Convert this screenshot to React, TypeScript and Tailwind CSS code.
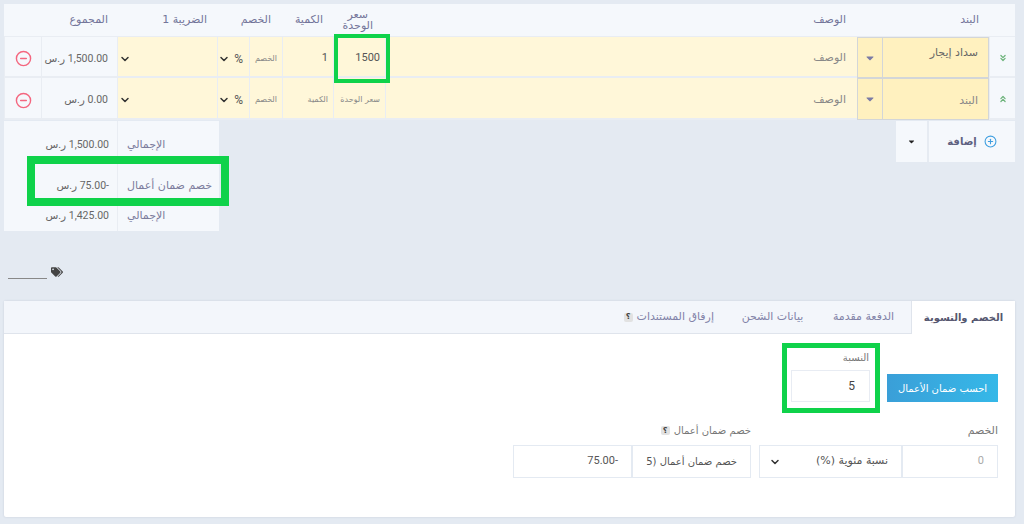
import React from 'react';
import { ChevronDown, ChevronsDown, ChevronsUp, CircleMinus, CirclePlus } from 'lucide-react';
import { FaCaretDown, FaTags } from 'react-icons/fa';

const headers = [
  { label: '', cls: '' },
  { label: 'البند', cls: 'pr-[10px]' },
  { label: '', cls: '' },
  { label: 'الوصف', cls: 'pr-[11px]' },
  { label: 'سعر الوحدة', cls: 'leading-[11px] text-center px-3' },
  { label: 'الكمية', cls: 'pr-[10px]' },
  { label: 'الخصم', cls: 'pr-[11px] whitespace-nowrap' },
  { label: '', cls: '' },
  { label: 'الضريبة 1', cls: 'pr-[10px]' },
  { label: 'المجموع', cls: 'pr-[9px]' },
  { label: '', cls: '' },
];

const cols = 'grid grid-cols-[26px_107px_25px_472px_52px_51px_33px_32px_100px_76px_37px]';

function Chevron({ className = '' }: { className?: string }) {
  return <ChevronDown className={`w-[12px] h-[12px] text-[#333] ${className}`} strokeWidth={3} />;
}

function Row({
  top,
  itemName,
  price,
  qty,
  total,
}: {
  top: boolean;
  itemName: string;
  price: string;
  qty: string;
  total: string;
}) {
  const cell = 'border-b-2 border-l border-[#e9edf3] flex items-center pt-[4px]';
  return (
    <div className={`${cols} ${top ? 'h-[41px]' : 'h-[42px]'} text-[#888]`}>
      <div className="border-b-2 border-l border-[#e9edf3] flex items-center pt-[2px] bg-[#f5f8fc] justify-center">
        {top ? (
          <ChevronsDown className="w-[10px] h-[10px] text-[#6cb37a]" strokeWidth={3} />
        ) : (
          <ChevronsUp className="w-[10px] h-[10px] text-[#6cb37a]" strokeWidth={3} />
        )}
      </div>
      <div
        className={`border border-[#d3d6d8] bg-[#fff1bf] flex pr-[10px] text-[11px] ${
          top ? 'pt-[7px] items-start text-[#666]' : 'pt-[5px] items-center text-[#888]'
        }`}
      >
        {itemName}
      </div>
      <div className="border border-r-0 border-[#d3d6d8] bg-[#fff1bf] flex items-center justify-center">
        <FaCaretDown className="w-[12px] h-[12px] text-[#7b7ba5]" />
      </div>
      <div className={`${cell} bg-[#fff7d9] pr-[11px] text-[11px]`}>الوصف</div>
      <div className={`${cell} bg-[#fff7d9] pr-[5px] ${price === '' ? 'text-[8px]' : ''}`}>
        {price === '' ? (
          'سعر الوحدة'
        ) : (
          <span className="text-[11px] text-[#555] font-['Roboto',sans-serif]">{price}</span>
        )}
      </div>
      <div className={`${cell} bg-[#fff7d9] pr-[5px]`}>
        {qty === '' ? (
          <span className="text-[8px]">الكمية</span>
        ) : (
          <span className="text-[11px] text-[#555] font-['Roboto',sans-serif]">{qty}</span>
        )}
      </div>
      <div className={`${cell} bg-[#fff7d9] pr-[5px] text-[8px]`}>الخصم</div>
      <div className={`${cell} bg-[#fff7d9] justify-between pr-[6px] text-[11px] text-[#555]`}>
        <span className="font-['Roboto',sans-serif] text-[12px]">%</span>
        <Chevron />
      </div>
      <div className={`${cell} bg-[#fff7d9] justify-end pl-[1px]`}>
        <Chevron />
      </div>
      <div className={`${cell} bg-[#f5f8fc] pr-[9px] whitespace-nowrap text-[10.5px] text-[#666] font-['Roboto','DejaVu_Sans',sans-serif]`}>
        {total}
      </div>
      <div className={`${cell} bg-[#f5f8fc] justify-center`}>
        <CircleMinus className="w-[17px] h-[17px] text-[#f4667f]" strokeWidth={2} />
      </div>
    </div>
  );
}

function SumRow({ label, value, cls }: { label: string; value: string; cls: string }) {
  return (
    <div className={`grid grid-cols-[102px_113px] ${cls}`}>
      <div className="border-l border-[#e9edf3] pl-[9px] text-left whitespace-nowrap text-[11px] text-[#7c7c9c]">{label}</div>
      <div className="pr-[8px] text-[10.5px] text-[#666] font-['Roboto','DejaVu_Sans',sans-serif]">{value}</div>
    </div>
  );
}

function Help() {
  return (
    <span className="inline-flex w-[9px] h-[9px] rounded-[2px] bg-[#e2e2e2] text-[#444] text-[8px] font-bold items-center justify-center leading-none">
      ؟
    </span>
  );
}

export default function App() {
  return (
    <div
      dir="rtl"
      className="relative w-[1024px] h-[524px] overflow-hidden bg-[#e4eaf2] pt-[4px] pr-[9px] pl-[4px] font-['DejaVu_Sans','Noto_Sans',sans-serif]"
    >
      {/* table */}
      <div className={`${cols} h-[33px] bg-[#f5f8fc] border-b border-[#e9edf3] text-[11px] text-[#73759a]`}>
        {headers.map((h, i) => (
          <div key={i} className={`flex items-center ${h.cls}`}>
            {h.label}
          </div>
        ))}
      </div>
      <Row top itemName="سداد إيجار" price="1500" qty="1" total="1,500.00 ر.س" />
      <Row top={false} itemName="البند" price="" qty="" total="0.00 ر.س" />

      {/* add button + totals */}
      <div className="flex justify-between items-start mt-[1px]">
        <div className="flex h-[41px] w-[119px] bg-[#f5f8fc]">
          <div className="w-[88px] flex items-center justify-center gap-[7px] border-l-2 border-[#e6ebf2] text-[10px] font-bold text-[#5e6080]">
            <CirclePlus className="w-[13px] h-[13px] text-[#3f9fe0]" strokeWidth={2} />
            إضافة
          </div>
          <div className="flex-1 flex items-center justify-center">
            <FaCaretDown className="w-[9px] h-[9px] text-[#222]" />
          </div>
        </div>
        <div className="w-[215px] bg-[#f5f8fc] h-[110px]">
          <SumRow label="الإجمالي" value="1,500.00 ر.س" cls="h-[44px] [&>div]:pt-[16px]" />
          <SumRow label="خصم ضمان أعمال" value="-75.00 ر.س" cls="h-[41px] [&>div]:pt-[13px]" />
          <SumRow label="الإجمالي" value="1,425.00 ر.س" cls="h-[25px] [&>div]:pt-[2px]" />
        </div>
      </div>

      {/* tags */}
      <div className="flex justify-end h-[70px] pt-[34px] pl-[4px]">
        <div className="flex items-start gap-[4px] flex-row-reverse">
          <div className="w-[39px] h-[14px] border-b border-[#888]" />
          <FaTags className="w-[12px] h-[12px] mt-[1px] text-[#444]" />
        </div>
      </div>

      {/* tab panel */}
      <div className="h-[216px] bg-white rounded-[2px] shadow-[0_0_2px_rgba(120,130,150,0.3)]">
        <div className="flex h-[33px] bg-[#f3f6fb] border-b border-[#dfe4ec]">
          <div className="w-[104px] h-[33px] bg-white border-l border-[#dfe4ec] flex items-center justify-center text-[10px] font-bold text-[#55576f]">
            الخصم والتسوية
          </div>
          <div className="flex items-center gap-[27px] pr-[15px] text-[11px] text-[#8283a8]">
            <span className="w-[65px] text-center whitespace-nowrap">الدفعة مقدمة</span>
            <span className="w-[63px] text-center whitespace-nowrap">بيانات الشحن</span>
            <span className="flex items-center gap-[4px]">
              إرفاق المستندات
              <Help />
            </span>
          </div>
        </div>

        <div className="flex items-end gap-[17px] pr-[17px] pt-[15px]">
          <button className="w-[111px] h-[28px] bg-gradient-to-l from-[#35b8e8] to-[#3a9fd8] text-white text-[10px] flex items-center justify-center">
            احسب ضمان الأعمال
          </button>
          <div className="flex flex-col w-[79px]">
            <label className="text-[10px] text-[#777] pt-[1px] pb-[5px] pr-[1px]">النسبة</label>
            <div className="h-[32px] border border-[#e8ecf3] flex items-center pr-[14px] text-[12px] text-[#444] font-['Roboto',sans-serif]">
              5
            </div>
          </div>
        </div>

        <div className="flex pr-[17px] pt-[21px] gap-[8px]">
          <div className="flex flex-col">
            <label className="text-[11px] text-[#777] h-[22px]">الخصم</label>
            <div className="flex h-[33px]">
              <div className="w-[96px] border border-[#e4eaf2] flex items-center pr-[13px] text-[11px] text-[#aaa] font-['Roboto',sans-serif]">
                0
              </div>
              <div className="w-[143px] border border-[#e4eaf2] flex items-center justify-between pr-[13px] pl-[9px] text-[11px] text-[#555]">
                نسبة مئوية (%)
                <Chevron />
              </div>
            </div>
          </div>
          <div className="flex flex-col">
            <label className="text-[10px] text-[#777] h-[22px] flex items-start gap-[4px]">
              خصم ضمان أعمال
              <span className="pt-[3px] flex">
                <Help />
              </span>
            </label>
            <div className="flex h-[33px]">
              <div className="w-[119px] border border-[#e4eaf2] flex items-center pr-[13px] text-[10px] text-[#555] whitespace-nowrap">
                خصم ضمان أعمال (5
              </div>
              <div className="w-[119px] border border-[#e4eaf2] flex items-center pr-[13px] text-[11px] text-[#555] font-['Roboto',sans-serif]">
                -75.00
              </div>
            </div>
          </div>
        </div>
      </div>

      {/* green annotation boxes */}
      <div className="absolute left-[334px] top-[34px] w-[56px] h-[49px] border-[4px] border-[#0fd24a]" />
      <div className="absolute left-[27px] top-[156px] w-[202px] h-[50px] border-[8px] border-[#0fd24a]" />
      <div className="absolute left-[782px] top-[343px] w-[98px] h-[70px] border-[5px] border-[#0fd24a]" />
    </div>
  );
}
